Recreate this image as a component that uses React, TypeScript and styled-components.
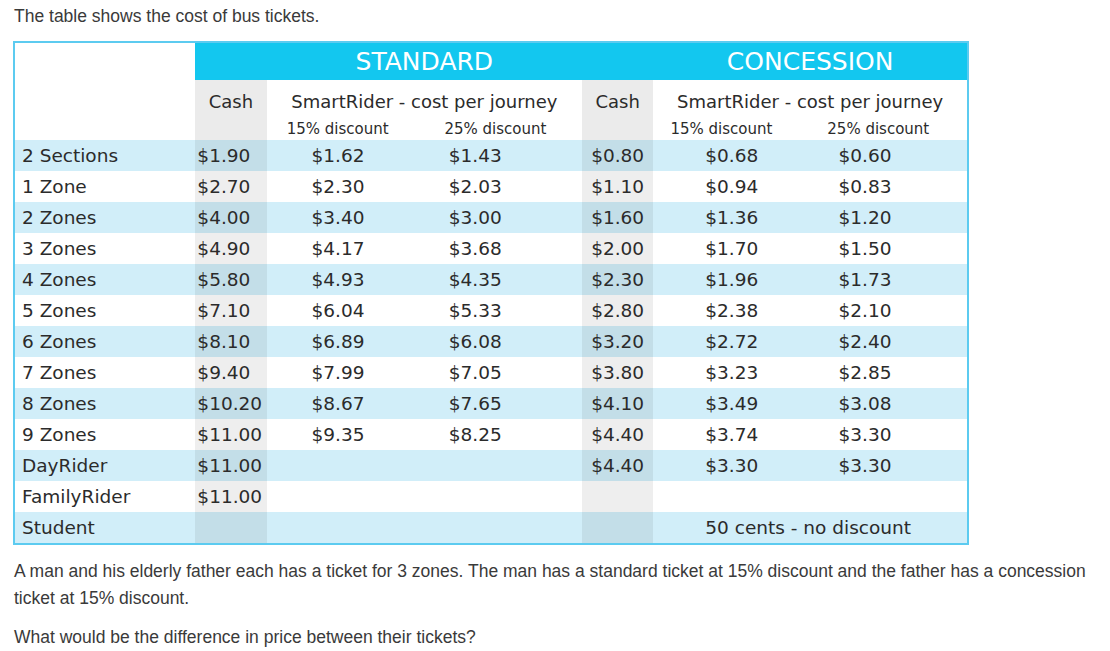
import styled, { createGlobalStyle } from 'styled-components'

const GlobalStyle = createGlobalStyle`
    body {
        margin: 0;
        background: #ffffff;
        font-family: "Liberation Sans", Arial, sans-serif;
        color: #3a3a3a;
    }
`

const Page = styled.div`
    padding: 3px 14px 0 14px;
    width: 1082px;
`

const Text = styled.p<{ $top?: number }>`
    margin: ${(p) => p.$top ?? 0}px 0 0 0;
    font-size: 17.5px;
    line-height: 27px;
`

const Table = styled.table`
    margin: 11px 0 0 -1px;
    border-collapse: collapse;
    table-layout: fixed;
    width: 956px;
    border: 2px solid #5ccbf0;
    font-family: "DejaVu Sans", Verdana, sans-serif;
    color: #2b2b2b;
`

const TitleCell = styled.th`
    background: #13c7ef;
    color: #ffffff;
    font-weight: normal;
    font-size: 25px;
    height: 37px;
    padding: 0;
    text-align: center;
`

const Blank = styled.th`
    background: #ffffff;
    padding: 0;
`

const SubHead = styled.th<{ $cash?: boolean }>`
    background: ${(p) => (p.$cash ? '#ebebeb' : '#ffffff')};
    font-weight: normal;
    font-size: 18px;
    height: 37px;
    padding: 3px 0 0 0;
    text-align: center;
    white-space: nowrap;
`

const Discount = styled.th<{ $cash?: boolean }>`
    background: ${(p) => (p.$cash ? '#ebebeb' : '#ffffff')};
    font-weight: normal;
    font-size: 15px;
    line-height: 18px;
    height: 20px;
    padding: 0;
    text-align: center;
    vertical-align: top;
    white-space: nowrap;
`

const Row = styled.tr<{ $stripe: boolean }>`
    background: ${(p) => (p.$stripe ? '#d1eef9' : '#ffffff')};
`

const Cell = styled.td<{ $pad: number; $cash?: boolean }>`
    height: 31px;
    padding: 0 0 0 ${(p) => p.$pad}px;
    font-size: 18.5px;
    white-space: nowrap;
    background: ${(p) => (p.$cash ? 'rgba(0, 0, 0, 0.065)' : 'transparent')};
`

const widths = [181, 71, 142, 173, 71, 136, 178]
const pads = [7, 2, 45, 40, 9, 52, 49]

type Line = { label: string; values: string[]; note?: string }

const rows: Line[] = [
    { label: '2 Sections', values: ['$1.90', '$1.62', '$1.43', '$0.80', '$0.68', '$0.60'] },
    { label: '1 Zone', values: ['$2.70', '$2.30', '$2.03', '$1.10', '$0.94', '$0.83'] },
    { label: '2 Zones', values: ['$4.00', '$3.40', '$3.00', '$1.60', '$1.36', '$1.20'] },
    { label: '3 Zones', values: ['$4.90', '$4.17', '$3.68', '$2.00', '$1.70', '$1.50'] },
    { label: '4 Zones', values: ['$5.80', '$4.93', '$4.35', '$2.30', '$1.96', '$1.73'] },
    { label: '5 Zones', values: ['$7.10', '$6.04', '$5.33', '$2.80', '$2.38', '$2.10'] },
    { label: '6 Zones', values: ['$8.10', '$6.89', '$6.08', '$3.20', '$2.72', '$2.40'] },
    { label: '7 Zones', values: ['$9.40', '$7.99', '$7.05', '$3.80', '$3.23', '$2.85'] },
    { label: '8 Zones', values: ['$10.20', '$8.67', '$7.65', '$4.10', '$3.49', '$3.08'] },
    { label: '9 Zones', values: ['$11.00', '$9.35', '$8.25', '$4.40', '$3.74', '$3.30'] },
    { label: 'DayRider', values: ['$11.00', '', '', '$4.40', '$3.30', '$3.30'] },
    { label: 'FamilyRider', values: ['$11.00', '', '', '', '', ''] },
    { label: 'Student', values: ['', '', '', ''], note: '50 cents - no discount' },
]

const cashCols = [1, 4]

function App() {
    return (
        <Page>
            <GlobalStyle />
            <Text>The table shows the cost of bus tickets.</Text>
            <Table>
                <colgroup>
                    {widths.map((w, i) => (
                        <col key={i} style={{ width: w }} />
                    ))}
                </colgroup>
                <thead>
                    <tr>
                        <Blank rowSpan={3} />
                        <TitleCell colSpan={4}>STANDARD</TitleCell>
                        <TitleCell colSpan={2}>CONCESSION</TitleCell>
                    </tr>
                    <tr>
                        <SubHead $cash>Cash</SubHead>
                        <SubHead colSpan={2}>SmartRider - cost per journey</SubHead>
                        <SubHead $cash>Cash</SubHead>
                        <SubHead colSpan={2}>SmartRider - cost per journey</SubHead>
                    </tr>
                    <tr>
                        <Discount $cash />
                        <Discount>15% discount</Discount>
                        <Discount>25% discount</Discount>
                        <Discount $cash />
                        <Discount>15% discount</Discount>
                        <Discount>25% discount</Discount>
                    </tr>
                </thead>
                <tbody>
                    {rows.map((r, i) => (
                        <Row key={r.label} $stripe={i % 2 === 0}>
                            <Cell $pad={pads[0]}>{r.label}</Cell>
                            {r.values.map((v, j) => (
                                <Cell key={j} $pad={pads[j + 1]} $cash={cashCols.includes(j + 1)}>
                                    {v}
                                </Cell>
                            ))}
                            {r.note && (
                                <Cell colSpan={2} $pad={pads[5]}>
                                    {r.note}
                                </Cell>
                            )}
                        </Row>
                    ))}
                </tbody>
            </Table>
            <Text $top={13}>
                A man and his elderly father each has a ticket for 3 zones. The man has a standard
                ticket at 15% discount and the father has a concession ticket at 15% discount.
            </Text>
            <Text $top={12}>What would be the difference in price between their tickets?</Text>
        </Page>
    )
}

export default App
